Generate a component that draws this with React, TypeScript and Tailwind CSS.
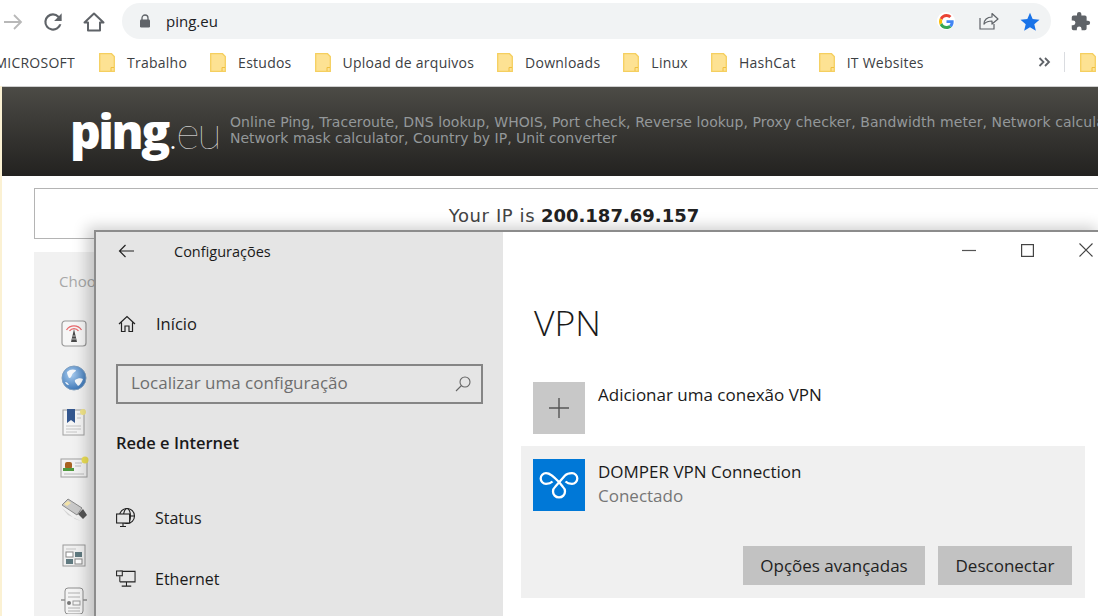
import React from 'react';

const bookmarks = ['Trabalho', 'Estudos', 'Upload de arquivos', 'Downloads', 'Linux', 'HashCat', 'IT Websites'];

const Folder = () => (
    <svg width="16" height="19" viewBox="0 0 16 19" className="shrink-0">
        <path d="M0.7 0.7H12.5L15.3 3.5V18.3H0.7Z" fill="#fde293" stroke="#f5cf5f" strokeWidth="1.3" />
        <path d="M12 18V14.5H15" fill="none" stroke="#f0c040" strokeWidth="1" />
    </svg>
);

const GoogleG = () => (
    <svg width="15" height="15" viewBox="0 0 48 48">
        <path fill="#ea4335" d="M24 9.500c3.500 0 6.700 1.300 9.100 3.500l6.800-6.800C35.800 2.400 30.300 0 24 0 14.600 0 6.500 5.400 2.600 13.200l7.900 6.200C12.400 13.600 17.700 9.500 24 9.500z" />
        <path fill="#4285f4" d="M46.900 24.500c0-1.600-.1-3.100-.4-4.500H24v9h12.900c-.6 3-2.200 5.500-4.700 7.200l7.700 6c4.500-4.200 7-10.300 7-17.700z" />
        <path fill="#fbbc05" d="M10.500 28.600c-.5-1.400-.8-3-.8-4.600s.3-3.200.8-4.600l-7.900-6.200C.9 16.500 0 20.100 0 24s.9 7.500 2.600 10.800l7.900-6.200z" />
        <path fill="#34a853" d="M24 48c6.500 0 11.900-2.100 15.900-5.800l-7.700-6c-2.200 1.400-4.900 2.300-8.200 2.300-6.300 0-11.600-4.100-13.500-9.900l-7.900 6.200C6.500 42.600 14.600 48 24 48z" />
    </svg>
);

const SideIcons = () => (
    <div className="pt-[21px] pl-[25px] flex flex-col">
        <div className="h-[44.500px] w-[30px] flex items-center justify-center">
            <svg width="26" height="27" viewBox="0 0 26 27">
                <rect x="1" y="1" width="24" height="25" rx="3" fill="#f6f6f6" stroke="#999" strokeWidth="1.200" />
                <path d="M5.500 10a9 9 0 0 1 15 0M8.500 11a5.500 5.500 0 0 1 9 0" fill="none" stroke="#e8696c" strokeWidth="1.300" />
                <path d="M13 9L10 22H16Z" fill="#4a4a4a" />
                <path d="M11.500 16H14.500M11 19H15" stroke="#ddd" strokeWidth="0.800" />
            </svg>
        </div>
        <div className="h-[44.500px] w-[30px] flex items-center justify-center">
            <svg width="26" height="26" viewBox="0 0 26 26">
                <defs>
                    <radialGradient id="globe" cx="0.4" cy="0.35" r="0.75">
                        <stop offset="0" stopColor="#a9cdf0" />
                        <stop offset="1" stopColor="#2f6cb0" />
                    </radialGradient>
                </defs>
                <circle cx="13" cy="13" r="12" fill="url(#globe)" stroke="#7f9fc0" />
                <path d="M6 7c3-3 6-3 9-2-1 3-3 2-4 5-1 2-1 3-3 3C7 11 6 9 6 7zM14 15c3-2 6-2 8-1-1 3-3 6-5 7-1-2-4-4-3-6zM4 17c2 0 3 1 4 3-2 0-3-1-4-3z" fill="#f4f7fa" />
            </svg>
        </div>
        <div className="h-[44.500px] w-[30px] flex items-center justify-center">
            <svg width="25" height="28" viewBox="0 0 25 28">
                <rect x="1" y="2" width="21" height="25" fill="#f5f5f5" stroke="#a0a0a0" />
                <path d="M5 1H13V15L9 12L5 15Z" fill="#34578f" />
                <path d="M15 6H19M15 10H19M4 18H19M4 21H19M4 24H15" stroke="#c4c4c4" />
                <circle cx="21" cy="4" r="3" fill="#f2e58a" />
            </svg>
        </div>
        <div className="h-[44.500px] w-[30px] flex items-center justify-center">
            <svg width="29" height="22" viewBox="0 0 29 22">
                <rect x="1" y="3" width="26" height="18" fill="#f2f2f2" stroke="#a0a0a0" />
                <rect x="5" y="6" width="7" height="7" rx="2" fill="#a8621f" />
                <rect x="3" y="12" width="11" height="3" fill="#4f9a3f" />
                <path d="M15 7H22M15 10H21M4 18H24" stroke="#bcbcbc" />
                <circle cx="25" cy="4" r="3.500" fill="#ecdf55" />
            </svg>
        </div>
        <div className="h-[44.500px] w-[30px] flex items-center justify-center">
            <svg width="28" height="26" viewBox="0 0 28 26">
                <path d="M2 10L15 21L21 23L8 17Z" fill="#bdbdbd" opacity="0.6" />
                <path d="M2 7L8 1L22 10L17 17Z" fill="#c9c9c9" stroke="#8a8a8a" />
                <path d="M4 6L8 3L11 5L7 8Z" fill="#f3e3a8" />
                <path d="M18 16L23 11L27 17L23 21Z" fill="#555" />
            </svg>
        </div>
        <div className="h-[44.500px] w-[30px] flex items-center justify-center">
            <svg width="24" height="23" viewBox="0 0 24 23">
                <rect x="1" y="1" width="22" height="21" fill="#f0f0f0" stroke="#9a9a9a" />
                <path d="M4 5H14" stroke="#c4c4c4" />
                <rect x="4" y="8" width="7" height="5" fill="#fff" stroke="#888" />
                <rect x="13" y="8" width="7" height="5" fill="#607a80" />
                <rect x="4" y="15" width="7" height="5" fill="#607a80" />
                <rect x="13" y="15" width="7" height="5" fill="#fff" stroke="#888" />
            </svg>
        </div>
        <div className="h-[44.500px] w-[30px] flex items-center justify-center">
            <svg width="28" height="27" viewBox="0 0 28 27">
                <path d="M1 13H27" stroke="#a8a8a8" strokeWidth="2" />
                <rect x="5" y="1" width="18" height="26" rx="3" fill="#f4f4f4" stroke="#8e8e8e" />
                <path d="M8 6H20M8 10H20M8 21H20M8 24H20" stroke="#b0b0b0" />
                <circle cx="9" cy="16" r="2" fill="#777" />
                <rect x="13" y="14" width="7" height="4" fill="none" stroke="#999" />
            </svg>
        </div>
    </div>
);

export default function App() {
    return (
        <div className="w-[1098px] h-[616px] overflow-hidden bg-white text-[#333] font-['Open_Sans',sans-serif]">
            {/* browser toolbar */}
            <div className="h-[43px] flex items-center">
                <svg width="22" height="20" viewBox="0 0 22 20" className="ml-[3px] shrink-0">
                    <path d="M1 10H18M11 3L18 10L11 17" fill="none" stroke="#b8b8b8" strokeWidth="1.800" />
                </svg>
                <svg width="26" height="26" viewBox="0 0 24 24" className="ml-[15px] shrink-0">
                    <path d="M17.650 6.350A7.950 7.950 0 0 0 12 4a8 8 0 1 0 7.730 10h-2.080A6 6 0 1 1 12 6c1.660 0 3.140.69 4.220 1.780L13 11h7V4z" fill="#5f6368" />
                </svg>
                <svg width="22" height="22" viewBox="0 0 22 22" className="ml-[17px] shrink-0">
                    <path d="M11 2.500L20.500 11.500H17V19.500H5V11.500H1.500Z" fill="none" stroke="#5f6368" strokeWidth="2" strokeLinejoin="round" />
                </svg>
                <div className="ml-[17px] w-[929px] h-[36px] -mt-[1px] rounded-full bg-[#f1f3f4] flex items-center pl-[17px] pr-[11px]">
                    <svg width="12" height="14" viewBox="0 0 12 14">
                        <path d="M3 6V4a3 3 0 0 1 6 0v2" fill="none" stroke="#5f6368" strokeWidth="1.300" />
                        <rect x="1" y="5.500" width="10" height="8" rx="1.300" fill="#5f6368" />
                    </svg>
                    <span className="ml-[15px] text-[15px] text-[#202124]">ping.eu</span>
                    <div className="ml-auto flex items-center">
                        <div className="w-[18px] h-[18px] flex items-center justify-center rounded-full bg-white"><GoogleG /></div>
                        <svg width="20" height="18" viewBox="0 0 20 18" className="ml-[24px]">
                            <path d="M1 6V17H15V12" fill="none" stroke="#5f6368" strokeWidth="1.200" />
                            <path d="M5 12C5 8 8 5 13 5V1.500L19 7L13 12V9C9 9 7 10 5 12Z" fill="none" stroke="#5f6368" strokeWidth="1.200" strokeLinejoin="round" />
                        </svg>
                        <svg width="20" height="19" viewBox="0 0 24 23" className="ml-[21px]">
                            <path d="M12 1L15.200 8.600L23.500 9.300L17.200 14.700L19.100 22.800L12 18.500L4.900 22.800L6.800 14.700L0.500 9.300L8.800 8.600Z" fill="#1a73e8" />
                        </svg>
                    </div>
                </div>
                <svg width="21" height="21" viewBox="0 0 24 24" className="ml-[19px] shrink-0">
                    <path d="M20.500 11H19V7a2 2 0 0 0-2-2h-4V3.500a2.500 2.500 0 0 0-5 0V5H4a2 2 0 0 0-2 2v3.800h1.500a2.700 2.700 0 0 1 0 5.400H2V20a2 2 0 0 0 2 2h3.800v-1.500a2.700 2.700 0 0 1 5.400 0V22H17a2 2 0 0 0 2-2v-4h1.500a2.500 2.500 0 0 0 0-5z" fill="#5f6368" />
                </svg>
            </div>

            {/* bookmarks bar */}
            <div className="h-[43px] pb-[5px] pr-[2px] flex items-center text-[14px] tracking-[0.25px] text-[#3c4043] whitespace-nowrap">
                <span className="w-[75px] flex justify-end overflow-hidden shrink-0">MICROSOFT</span>
                <div className="ml-[24px] flex items-center gap-[23px]">
                    {bookmarks.map((name) => (
                        <div key={name} className="flex items-center gap-[12px]">
                            <Folder />
                            <span>{name}</span>
                        </div>
                    ))}
                </div>
                <svg width="13" height="10" viewBox="0 0 13 10" className="ml-auto">
                    <path d="M1.500 1L5.500 5L1.500 9M7 1L11 5L7 9" fill="none" stroke="#5f6368" strokeWidth="1.800" />
                </svg>
                <div className="ml-[13px] w-px h-[20px] bg-[#dadce0]" />
                <div className="ml-[15px] shrink-0"><Folder /></div>
            </div>

            {/* page */}
            <div className="relative h-[530px] flex">
                <div className="w-[2px] shrink-0 bg-[#fbf1d3]" />
                <div className="flex-1 min-w-0">
                    <div className="h-[90px] border-t border-[#cfcfcf] bg-gradient-to-b from-[#4c4b46] to-[#232220] flex items-center pl-[68px] overflow-hidden whitespace-nowrap">
                        <div className="w-[160px] flex items-baseline text-white shrink-0 leading-none -mt-[2px]">
                            <span className="text-[48px] font-extrabold tracking-[-2.500px]">ping</span>
                            <span className="text-[45px] font-thin font-['Lato',sans-serif] tracking-[-2px] text-white">.eu</span>
                        </div>
                        <div className="font-['DejaVu_Sans',sans-serif] text-[14px] leading-[16px] text-[#94989a] -mt-[4px]">
                            <div className="tracking-[0.08px]">Online Ping, Traceroute, DNS lookup, WHOIS, Port check, Reverse lookup, Proxy checker, Bandwidth meter, Network calculator,</div>
                            <div>Network mask calculator, Country by IP, Unit converter</div>
                        </div>
                    </div>
                    <div className="mt-[12px] ml-[32px] w-[1080px] h-[51px] border border-[#b4b4b4] flex items-end justify-center pb-[13px] font-['DejaVu_Sans',sans-serif] text-[18px] leading-[18px] text-[#222]">
                        <span><span className="tracking-[0.6px] text-[#444]">Your IP is</span> <b>200.187.69.157</b></span>
                    </div>
                    <div className="mt-[13px] ml-[32px] h-[370px] bg-[#f1f1f1]">
                        <div className="pt-[20px] pl-[25px] text-[15px] leading-[18px] text-[#a8a8a8]">Choose</div>
                        <SideIcons />
                    </div>
                </div>

                {/* settings window */}
                <div className="absolute left-[94px] top-[144px] w-[1010px] h-[400px] flex border-t-2 border-l-2 border-[#8c8c8c] shadow-[-7px_-3px_14px_rgba(0,0,0,0.2)] text-[17px] text-[#1a1a1a]">
                    <div className="w-[407px] shrink-0 bg-[#e5e5e5] pl-[20px] text-[16.500px]">
                        <div className="h-[40px] flex items-center">
                            <svg width="17" height="14" viewBox="0 0 17 14" className="ml-[2px] -mt-[2px]">
                                <path d="M16 7H1.500M7.500 1L1.500 7L7.500 13" fill="none" stroke="#222" strokeWidth="1.200" />
                            </svg>
                            <span className="ml-[39px] text-[14.500px]">Configurações</span>
                        </div>
                        <div className="mt-[32px] h-[40px] flex items-center">
                            <svg width="18" height="18" viewBox="0 0 18 18" className="ml-[2px]">
                                <path d="M1 9L9 1.500L17 9M3.500 7.500V16.500H7V11H11V16.500H14.500V7.500" fill="none" stroke="#222" strokeWidth="1.200" />
                            </svg>
                            <span className="ml-[20px]">Início</span>
                        </div>
                        <div className="mt-[20px] w-[367px] h-[40px] border-2 border-[#858585] flex items-center pl-[13px] pr-[10px] text-[17px] text-[#6e6e6e]">
                            <span className="-mt-[2px]">Localizar uma configuração</span>
                            <svg width="16" height="16" viewBox="0 0 16 16" className="ml-auto">
                                <circle cx="10" cy="6" r="5" fill="none" stroke="#666" strokeWidth="1.100" />
                                <path d="M6.500 9.500L1 15" stroke="#666" strokeWidth="1.100" />
                            </svg>
                        </div>
                        <div className="mt-[27px] leading-[24px] font-semibold">Rede e Internet</div>
                        <div className="mt-[51px] h-[24px] flex items-center text-[16px]">
                            <svg width="20" height="20" viewBox="0 0 20 20">
                                <circle cx="11" cy="8" r="7.500" fill="none" stroke="#222" strokeWidth="1.100" />
                                <ellipse cx="11" cy="8" rx="3.500" ry="7.500" fill="none" stroke="#222" strokeWidth="1.100" />
                                <path d="M3.500 8H18" stroke="#222" strokeWidth="1.100" />
                                <rect x="0.600" y="6" width="13" height="9" fill="#e5e5e5" stroke="#222" strokeWidth="1.100" />
                                <path d="M7 15V18M4 18.500H10" stroke="#222" strokeWidth="1.100" />
                            </svg>
                            <span className="ml-[19px]">Status</span>
                        </div>
                        <div className="mt-[37px] h-[24px] flex items-center text-[16px]">
                            <svg width="20" height="18" viewBox="0 0 21 18">
                                <path d="M4 1H20V12H4M11 12V16M6 16.500H16" fill="none" stroke="#222" strokeWidth="1.100" />
                                <rect x="0.600" y="0.600" width="6" height="5" fill="#e5e5e5" stroke="#222" strokeWidth="1.100" />
                                <path d="M4 6V12" stroke="#222" strokeWidth="1.100" />
                            </svg>
                            <span className="ml-[19px]">Ethernet</span>
                        </div>
                    </div>
                    <div className="flex-1 bg-white">
                        <div className="w-[595px] h-[40px] flex items-start">
                            <div className="ml-[459px] flex items-center gap-[45px] mt-[11px]">
                                <svg width="14" height="14" viewBox="0 0 14 14"><path d="M0 7.500H14" stroke="#555" strokeWidth="1.200" /></svg>
                                <svg width="13" height="13" viewBox="0 0 13 13"><rect x="0.600" y="0.600" width="11.800" height="11.800" fill="none" stroke="#444" strokeWidth="1.200" /></svg>
                                <svg width="14" height="14" viewBox="0 0 14 14"><path d="M0.500 0.500L13.500 13.500M13.500 0.500L0.500 13.500" stroke="#444" strokeWidth="1.100" /></svg>
                            </div>
                        </div>
                        <div className="ml-[31px] mt-[25px] text-[35.500px] font-light leading-[50px] text-[#1a1a1a]">VPN</div>
                        <div className="ml-[30px] mt-[35px] flex items-start">
                            <div className="w-[52px] h-[52px] bg-[#c8c8c8] flex items-center justify-center">
                                <svg width="22" height="22" viewBox="0 0 22 22"><path d="M11 1V21M1 11H21" stroke="#555" strokeWidth="1.400" /></svg>
                            </div>
                            <span className="ml-[13px] mt-[1px] leading-[24px]">Adicionar uma conexão VPN</span>
                        </div>
                        <div className="ml-[18px] mt-[12px] w-[564px] h-[152px] bg-[#f0f0f0] pt-[13px] pl-[12px]">
                            <div className="flex items-start">
                                <svg width="52" height="52" viewBox="0 0 52 52" fill="none" stroke="#fff" strokeWidth="2.300" className="shrink-0 bg-[#0078d7]">
                                    <path d="M13 24.800A5.300 5.300 0 1 1 13 14.200C17 14.200 20 17 26 23L30 28A6 6 0 1 1 22 28L32 16.500C33.500 15 36 14.200 39 14.200A5.300 5.300 0 1 1 39 24.800C36 24.800 34 24 32.500 22.500M13 24.800C16 24.800 18 24 19.500 22.500" />
                                </svg>
                                <div className="ml-[13px] leading-[24px] mt-[1px]">
                                    <div>DOMPER VPN Connection</div>
                                    <div className="text-[#767676]">Conectado</div>
                                </div>
                            </div>
                            <div className="mt-[35px] mr-[13px] flex justify-end gap-[13px] text-[#222]">
                                <div className="w-[182px] h-[39px] bg-[#c2c2c2] flex items-center justify-center">Opções avançadas</div>
                                <div className="w-[134px] h-[39px] bg-[#c2c2c2] flex items-center justify-center">Desconectar</div>
                            </div>
                        </div>
                    </div>
                </div>
            </div>
        </div>
    );
}
